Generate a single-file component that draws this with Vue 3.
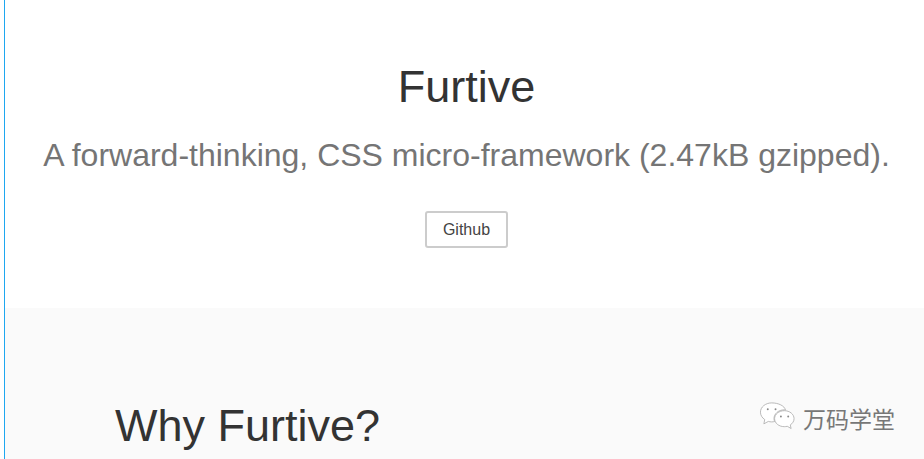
<script setup>
const title = 'Furtive'
const tagline = 'A forward-thinking, CSS micro-framework (2.47kB gzipped).'
</script>

<template>
  <div class="page">
    <header class="hero">
      <h1>{{ title }}</h1>
      <p class="lead">{{ tagline }}</p>
      <a class="btn" href="#">Github</a>
    </header>
    <section class="why">
      <h2>Why Furtive?</h2>
    </section>
    <div class="watermark">
      <svg width="37" height="34" viewBox="0 0 38 34" fill="#fff" stroke="#a8a8a8" stroke-width="0.8">
        <path d="M13 1.500C6.700 1.500 1.500 5.700 1.500 11c0 3.100 1.700 5.800 4.400 7.600L5 23l4.600-2.500c1.100.3 2.200.5 3.400.5 1 0 2-.1 3-.4-.4-1-.6-2-.6-3 0-5 4.700-9 10.600-9 .4 0 .8 0 1.200.1C26.100 4.500 20.100 1.500 13 1.500z" />
        <path d="M26 9.500c-5.500 0-10 3.600-10 8.200s4.500 8.200 10 8.200c1 0 2-.1 3-.4l4 2.300-.9-3.700c2.400-1.500 3.900-3.800 3.900-6.400 0-4.600-4.500-8.200-10-8.200z" />
        <circle cx="9" cy="8" r="1" fill="#888" stroke="none" />
        <circle cx="17" cy="8" r="1" fill="#888" stroke="none" />
        <circle cx="22.500" cy="15.500" r="1" fill="#888" stroke="none" />
        <circle cx="30" cy="15.500" r="1" fill="#888" stroke="none" />
      </svg>
      <span>万码学堂</span>
    </div>
  </div>
</template>

<style>
html,
body {
  margin: 0;
  background: #fff;
  overflow: hidden;
}
</style>

<style scoped>
.page {
  position: relative;
  box-sizing: border-box;
  width: 924px;
  height: 459px;
  padding-left: 4px;
  overflow: hidden;
  font-family: "Liberation Sans", Arial, sans-serif;
  color: #333;
}

.page::before {
  content: "";
  position: absolute;
  left: 4px;
  top: 0;
  bottom: 0;
  width: 1px;
  background: #1ea7f0;
}

.hero {
  height: 308px;
  box-sizing: border-box;
  padding: 60px 0 0 5px;
  text-align: center;
}

h1 {
  margin: 0;
  font-size: 45px;
  line-height: 54px;
  font-weight: 400;
  color: #333;
}

.lead {
  margin: 21px 0 0;
  font-size: 32px;
  line-height: 40px;
  color: #757575;
}

.btn {
  display: inline-block;
  box-sizing: border-box;
  width: 83px;
  height: 37px;
  margin-top: 36px;
  border: 2px solid #ccc;
  border-radius: 3px;
  font-size: 16px;
  line-height: 33px;
  color: #444;
  text-decoration: none;
}

.why {
  height: 151px;
  margin-left: 1px;
  padding: 91px 0 0 110px;
  box-sizing: border-box;
  background: #fafafa;
}

h2 {
  margin: 0;
  font-size: 45px;
  line-height: 54px;
  font-weight: 400;
  color: #333;
}

.watermark {
  position: absolute;
  left: 759px;
  top: 401px;
  display: flex;
  align-items: center;
  gap: 7px;
  font-family: "Noto Sans CJK SC", sans-serif;
  font-size: 23px;
  color: #777;
}
</style>
